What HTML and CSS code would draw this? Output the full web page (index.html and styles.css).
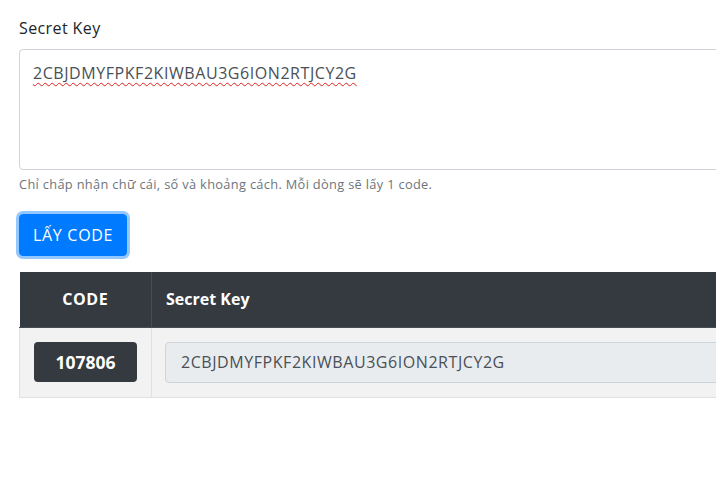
FILE: index.html
```html
<!DOCTYPE html>
<html lang="vi">
<head>
<meta charset="utf-8">
<title>2FA</title>
<link rel="stylesheet" href="styles.css">
</head>
<body>
<div class="container">
  <div class="form-group">
    <label class="label" for="secret">Secret Key</label>
    <textarea id="secret" class="textarea" rows="4">2CBJDMYFPKF2KIWBAU3G6ION2RTJCY2G</textarea>
    <small class="form-text">Chỉ chấp nhận chữ cái, số và khoảng cách. Mỗi dòng sẽ lấy 1 code.</small>
  </div>
  <button class="btn" type="button">LẤY CODE</button>
  <table class="table">
    <thead>
      <tr><th class="col-code">CODE</th><th class="col-key">Secret Key</th></tr>
    </thead>
    <tbody>
      <tr>
        <td class="col-code"><span class="code-badge">107806</span></td>
        <td class="col-key"><input class="key-input" type="text" readonly value="2CBJDMYFPKF2KIWBAU3G6ION2RTJCY2G"></td>
      </tr>
    </tbody>
  </table>
</div>
</body>
</html>
```

FILE: styles.css
```css
html, body {
  margin: 0;
  padding: 0;
  overflow: hidden;
  background: #fff;
}
body {
  font-family: "Open Sans", "Noto Sans", sans-serif;
  font-size: 16px;
  line-height: 1.5;
  color: #212529;
}
.container {
  width: 1000px;
  padding: 16px 0 0 19px;
}
.form-group {
  display: flex;
  flex-direction: column;
  margin-bottom: 20px;
}
.label {
  margin-bottom: 9px;
  letter-spacing: 0.4px;
}
.textarea {
  box-sizing: border-box;
  height: 121px;
  padding: 11px 13px;
  font: inherit;
  letter-spacing: 0.56px;
  color: #495057;
  border: 1px solid #ced4da;
  border-radius: 4px;
  resize: none;
  outline: none;
  text-decoration: underline wavy #e0201c;
  text-decoration-skip-ink: none;
  text-underline-offset: 3px;
  text-decoration-thickness: 1px;
}
.form-text {
  margin-top: 5px;
  font-size: 12.8px;
  letter-spacing: 0.33px;
  color: #6c757d;
}
.btn {
  display: block;
  height: 42px;
  padding: 0 13px;
  font: inherit;
  letter-spacing: 0.7px;
  color: #fff;
  background: #007bff;
  border: 1px solid #007bff;
  border-radius: 4px;
  box-shadow: 0 0 0 3px rgba(38, 143, 255, 0.5);
}
.table {
  margin-top: 16px;
  width: 100%;
  border-collapse: collapse;
}
.table th {
  background: #343a40;
  color: #fff;
  font-weight: 700;
  padding: 15px 14px;
  text-align: left;
  border: 1px solid #454d55;
  border-top: 0;
  border-left: 0;
  height: 55px;
  box-sizing: border-box;
}
.table th.col-code {
  text-align: center;
  letter-spacing: 0.6px;
}
.table td {
  background: #f2f2f2;
  padding: 14px 14px 14px 13px;
  border: 1px solid #dee2e6;
}
.col-code {
  width: 132px;
  box-sizing: border-box;
}
.table td.col-code {
  text-align: center;
  padding-left: 14px;
  padding-right: 14px;
}
.code-badge {
  display: inline-block;
  width: 103px;
  height: 40px;
  line-height: 40px;
  background: #343a40;
  color: #fff;
  font-weight: 700;
  font-size: 17.5px;
  border-radius: 4px;
  text-align: center;
}
.key-input {
  box-sizing: border-box;
  display: block;
  width: 100%;
  height: 41px;
  padding: 0 15px;
  font: inherit;
  letter-spacing: 0.56px;
  color: #495057;
  background: #e9ecef;
  border: 1px solid #ced4da;
  border-radius: 4px;
  outline: none;
}
```
